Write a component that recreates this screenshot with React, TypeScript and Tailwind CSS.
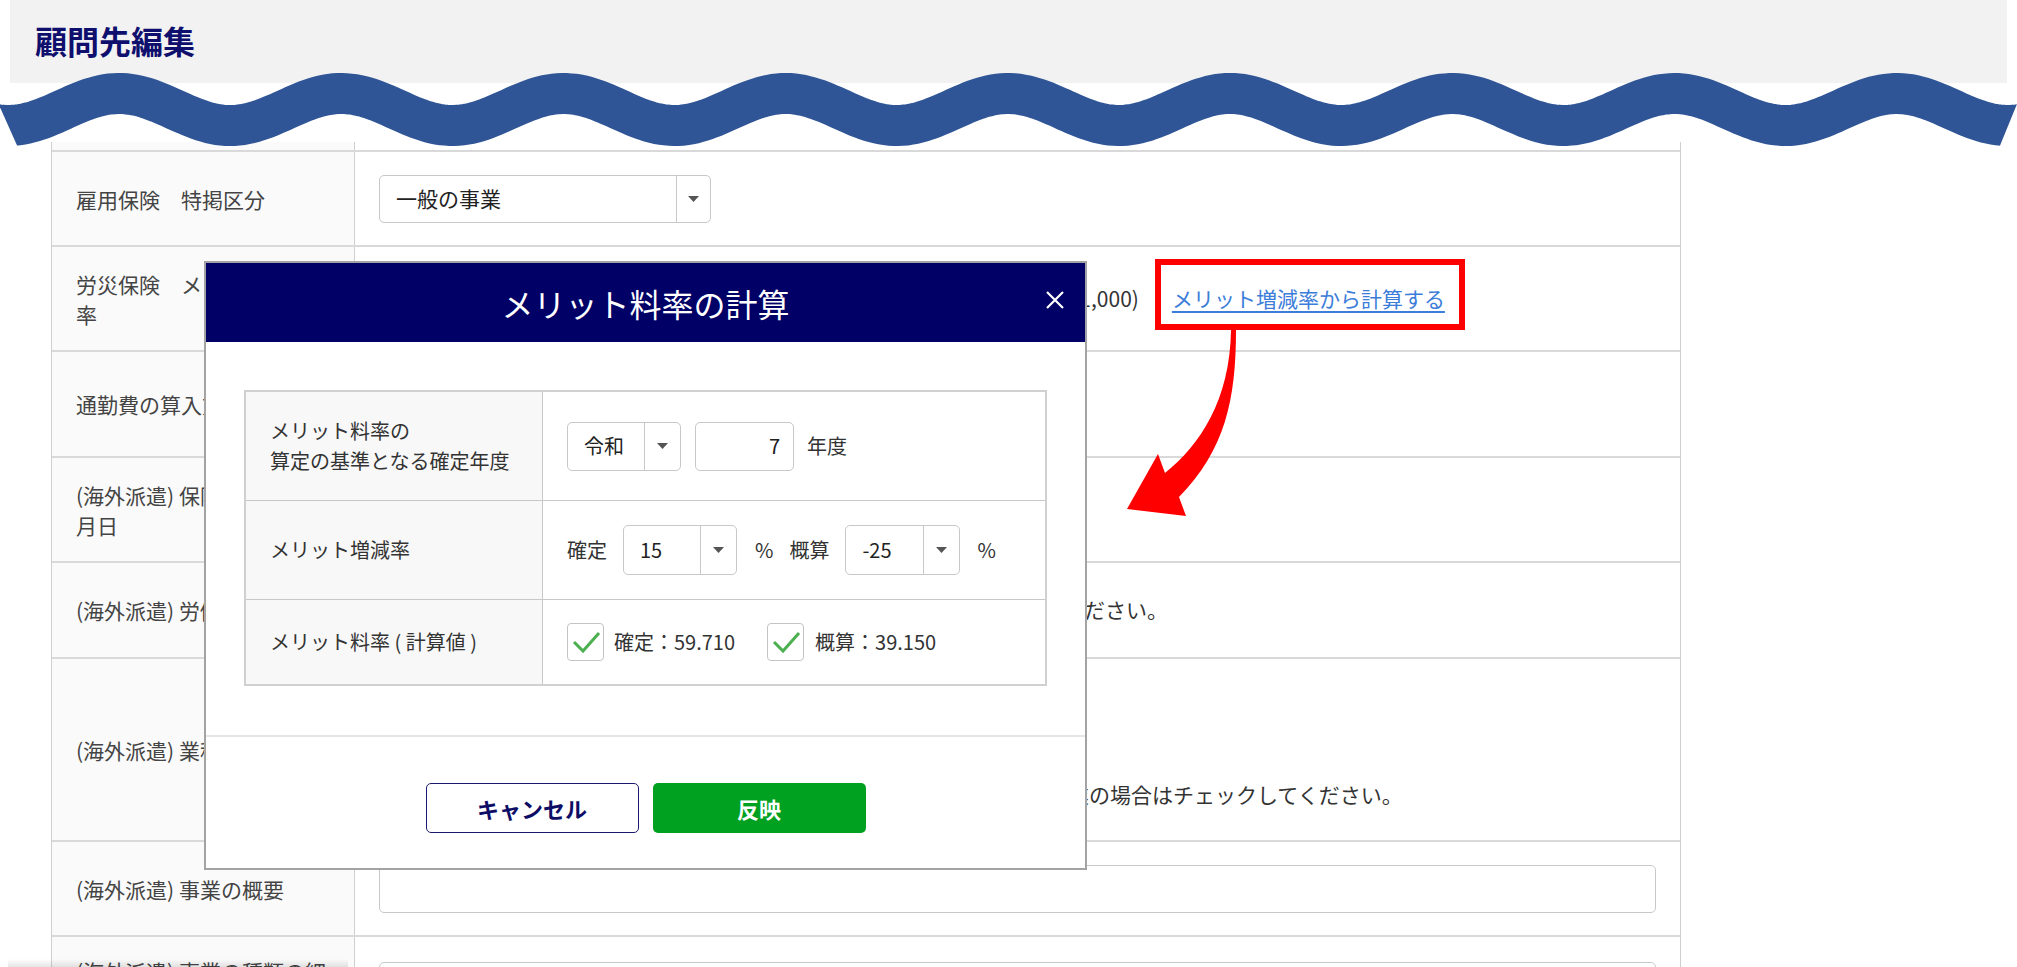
import React from "react";

// sine band that marks the cut between the page header and the table
const wavePath = (() => {
    const pts: string[] = [];
    for (let x = -30; x <= 2050; x += 4) {
        const y = 109.5 + 16 * Math.cos((2 * Math.PI * (x - 8)) / 222.2);
        pts.push(`${x},${y.toFixed(1)}`);
    }
    return "M" + pts.join(" L");
})();

function Caret() {
    return (
        <svg width="11" height="6" viewBox="0 0 11 6">
            <path d="M0 0h11L5.5 6z" fill="#555" />
        </svg>
    );
}

function Select({
    value,
    className,
    arrowW = "w-[36px]",
    size = "text-[20px]",
}: {
    value: string;
    className: string;
    arrowW?: string;
    size?: string;
}) {
    return (
        <div className={`flex items-stretch rounded-[5px] border border-[#c8c8c8] bg-white ${className}`}>
            <div className={`flex flex-1 items-center pl-4 text-[#222] ${size}`}>{value}</div>
            <div className={`flex items-center justify-center border-l border-[#c8c8c8] ${arrowW}`}>
                <Caret />
            </div>
        </div>
    );
}

function Check() {
    return (
        <div className="flex h-[38px] w-[37px] shrink-0 items-center justify-center rounded-[4px] border border-[#c4c4c4] bg-white">
            <svg width="35" height="36" viewBox="0 0 35 36">
                <path d="M6 18 L15 27 L31 9" stroke="#4caf50" strokeWidth="3" fill="none" />
            </svg>
        </div>
    );
}

function Row({ label, h, children }: { label: React.ReactNode; h: string; children?: React.ReactNode }) {
    return (
        <div className={`flex border-t-2 border-[#d9d9d9] ${h}`}>
            <div className="flex w-[303px] shrink-0 items-center border-r border-[#d0d0d0] bg-[#fafafa] px-6 text-[21px] leading-[30px] text-[#444]">
                <span>{label}</span>
            </div>
            <div className="flex min-w-0 flex-1 items-center px-6 text-[21px] text-[#333]">{children}</div>
        </div>
    );
}

function MeritModal() {
    return (
        <div className="absolute left-[204px] top-[261px] flex h-[609px] w-[883px] flex-col border-2 border-[#a3a3a3] bg-white">
            <div className="relative flex h-[79px] shrink-0 items-center justify-center bg-[#000066]">
                <span className="text-[32px] text-white">メリット料率の計算</span>
                <button className="absolute right-[21px] top-[28px]">
                    <svg width="18" height="18" viewBox="0 0 18 18">
                        <path d="M1 1L17 17M17 1L1 17" stroke="white" strokeWidth="2.2" />
                    </svg>
                </button>
            </div>

            <div className="px-[38px] pt-[48px] pb-[49px]">
                <div className="border-2 border-[#d0d0d0] text-[20px] text-[#333]">
                    <div className="flex h-[108px]">
                        <div className="flex w-[297px] shrink-0 items-center border-r border-[#c8c8c8] bg-[#f8f8f8] px-6 leading-[30px]">
                            メリット料率の
                            <br />
                            算定の基準となる確定年度
                        </div>
                        <div className="flex items-center px-6">
                            <Select value="令和" className="h-[49px] w-[114px]" />
                            <div className="ml-[14px] flex h-[49px] w-[99px] items-center justify-end rounded-[5px] border border-[#c8c8c8] pr-[13px] text-[#222]">
                                7
                            </div>
                            <span className="ml-[13px]">年度</span>
                        </div>
                    </div>
                    <div className="flex h-[99px] border-t border-[#c8c8c8]">
                        <div className="flex w-[297px] shrink-0 items-center border-r border-[#c8c8c8] bg-[#f8f8f8] px-6">
                            メリット増減率
                        </div>
                        <div className="flex items-center px-6">
                            <span>確定</span>
                            <Select value="15" className="ml-4 h-[50px] w-[114px]" />
                            <span className="ml-[18px]">%</span>
                            <span className="ml-4">概算</span>
                            <Select value="-25" className="ml-4 h-[50px] w-[115px]" />
                            <span className="ml-[17px]">%</span>
                        </div>
                    </div>
                    <div className="flex h-[85px] border-t border-[#c8c8c8]">
                        <div className="flex w-[297px] shrink-0 items-center border-r border-[#c8c8c8] bg-[#f8f8f8] px-6">
                            メリット料率 ( 計算値 )
                        </div>
                        <div className="flex items-center px-6">
                            <Check />
                            <span className="ml-[10px]">確定：59.710</span>
                            <div className="ml-[32px]">
                                <Check />
                            </div>
                            <span className="ml-[11px]">概算：39.150</span>
                        </div>
                    </div>
                </div>
            </div>

            <div className="flex flex-1 justify-center gap-[14px] border-t-2 border-[#e6e6e6] pt-[46px]">
                <button className="h-[50px] w-[213px] rounded-[5px] border-[1.5px] border-[#1a1a70] bg-white text-[22px] font-bold text-[#0d0d66]">
                    キャンセル
                </button>
                <button className="h-[50px] w-[213px] rounded-[5px] bg-[#00a021] text-[22px] font-bold text-white">
                    反映
                </button>
            </div>
        </div>
    );
}

export default function App() {
    return (
        <div className="relative h-[967px] w-full overflow-hidden bg-white font-['Noto_Sans_CJK_JP','Noto_Sans',sans-serif] text-[#333]">
            {/* page header */}
            <div className="mx-[10px] h-[83px] bg-[#f2f2f2] pl-[25px] pt-[19px]">
                <h1 className="text-[32px] font-bold leading-[42px] text-[#0f0f6e]">顧問先編集</h1>
            </div>

            {/* edit table */}
            <div className="ml-[51px] mt-[59px] w-[1630px] border-x border-[#cfcfcf]">
                <div className="flex h-[8px]">
                    <div className="w-[303px] border-r border-[#d0d0d0] bg-[#fafafa]" />
                </div>
                <Row label="雇用保険　特掲区分" h="h-[95px]">
                    <Select value="一般の事業" className="h-[48px] w-[332px]" arrowW="w-[34px]" size="text-[21px]" />
                </Row>
                <Row label="労災保険　メリット制の料率" h="h-[105px]">
                    <div className="h-[48px] w-[526px] shrink-0 rounded-[5px] border border-[#c8c8c8]" />
                    <span className="ml-3 whitespace-nowrap">/1,000　(例：13/1,000)</span>
                    <a href="#" className="ml-[33px] whitespace-nowrap text-[#3c7dd9] underline underline-offset-4">
                        メリット増減率から計算する
                    </a>
                </Row>
                <Row label="通勤費の算入方法" h="h-[106px]">
                    <Select value="含める" className="h-[48px] w-[240px]" arrowW="w-[34px]" size="text-[21px]" />
                </Row>
                <Row label="(海外派遣) 保険関係成立年月日" h="h-[105px]">
                    <div className="h-[48px] w-[260px] rounded-[5px] border border-[#c8c8c8]" />
                </Row>
                <Row label="(海外派遣) 労働保険番号" h="h-[96px]">
                    <div className="h-[48px] w-[373px] shrink-0 rounded-[5px] border border-[#c8c8c8]" />
                    <span className="ml-4 whitespace-nowrap">労働保険番号は14桁で入力してください。</span>
                </Row>
                <Row label="(海外派遣) 業種区分" h="h-[183px]">
                    <div className="flex flex-col gap-[30px] pt-[12px]">
                        <Select value="" className="h-[48px] w-[332px]" arrowW="w-[34px]" />
                        <div className="flex items-center">
                            <div className="h-[38px] w-[37px] shrink-0 rounded-[4px] border border-[#c4c4c4]" />
                            <span className="ml-[22px] whitespace-nowrap">
                                派遣先の事業が「有期事業」または「一括有期事業」に該当する事業の場合はチェックしてください。
                            </span>
                        </div>
                    </div>
                </Row>
                <Row label="(海外派遣) 事業の概要" h="h-[95px]">
                    <div className="h-[48px] w-full rounded-[5px] border border-[#c8c8c8]" />
                </Row>
                <Row label="(海外派遣) 事業の種類の細目" h="h-[100px]">
                    <div className="h-[48px] w-full rounded-[5px] border border-[#c8c8c8]" />
                </Row>
            </div>

            {/* faint shadow at the lower left edge of the capture */}
            <div className="absolute bottom-0 left-[8px] h-[8px] w-[340px] bg-gradient-to-b from-transparent to-[#0000001a]" />

            {/* wave cut mark */}
            <svg className="absolute left-0 top-0" width="2017" height="170" viewBox="0 0 2017 170">
                <defs>
                    <clipPath id="waveClip">
                        <polygon points="-21,60 2035,60 1990,170 28,170" />
                    </clipPath>
                </defs>
                <path d={wavePath} stroke="#2f5597" strokeWidth="41" fill="none" clipPath="url(#waveClip)" />
            </svg>

            <MeritModal />

            {/* annotation: red frame + arrow */}
            <div className="absolute left-[1155px] top-[259px] h-[71px] w-[310px] border-[6px] border-[#ff0000]" />
            <svg className="absolute left-0 top-0" width="2017" height="967" viewBox="0 0 2017 967">
                <path
                    d="M1231 330 L1236 330 C1236 400 1225 450 1179 497 L1186 516 L1127 509 L1158 454 L1165 473 C1200 445 1230 400 1231 330 Z"
                    fill="#ff0000"
                />
            </svg>
        </div>
    );
}
